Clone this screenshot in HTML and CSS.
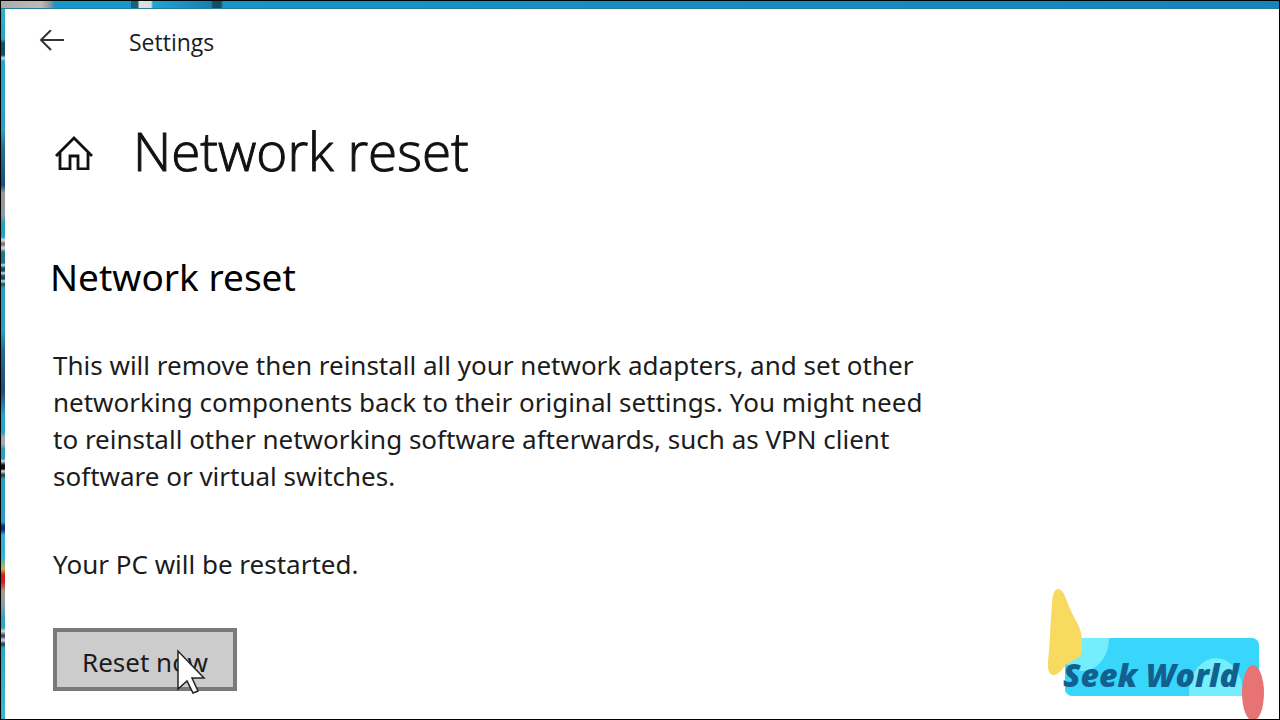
FILE: index.html
```html
<!DOCTYPE html>
<html lang="en">
<head>
    <meta charset="UTF-8">
    <meta name="viewport" content="width=device-width, initial-scale=1.0">
    <title>Network reset</title>
    <link rel="stylesheet" href="styles.css">
</head>
<body>
    <div class="desktop">
        <div class="desktop-left"></div>
        <div class="desktop-top"></div>

        <div class="window">
            <header class="titlebar">
                <button type="button" class="back" aria-label="Back">
                    <svg width="26" height="24" viewBox="0 0 26 24" fill="none" stroke="#333" stroke-width="2">
                        <path d="M25 10H2M12 0L2 10l10 10"/>
                    </svg>
                </button>
                <span class="app-name">Settings</span>
            </header>

            <div class="page-title">
                <a href="#" class="home" aria-label="Home">
                    <svg width="38" height="38" viewBox="0 0 38 38" fill="none" stroke="#111" stroke-width="2.8">
                        <path d="M1 24L19 6l18 18M5 20v17h10V24h8v13h10V20"/>
                    </svg>
                </a>
                <h1>Network reset</h1>
            </div>

            <main>
                <h2>Network reset</h2>
                <p>This will remove then reinstall all your network adapters, and set other<br>
                networking components back to their original settings. You might need<br>
                to reinstall other networking software afterwards, such as VPN client<br>
                software or virtual switches.</p>
                <p>Your PC will be restarted.</p>

                <div class="action">
                    <button type="button" class="reset">Reset now</button>
                    <!-- Mouse pointer -->
                    <svg class="pointer" width="30" height="46" viewBox="0 0 30 46">
                        <path d="M2 2v38l9-8 6 12 5-2-6-13h12z" fill="#fff" stroke="#222" stroke-width="1.5"/>
                    </svg>
                </div>
            </main>
        </div>

        <!-- Channel badge -->
        <div class="badge">
            <svg class="badge-art" width="220" height="132" viewBox="0 0 220 132">
                <defs>
                    <clipPath id="card"><rect x="17" y="50" width="194" height="58" rx="7"/></clipPath>
                </defs>
                <g clip-path="url(#card)">
                    <rect x="17" y="50" width="194" height="58" fill="#38d6fb"/>
                    <ellipse cx="35" cy="50" rx="26" ry="33" fill="#74edfd"/>
                    <ellipse cx="168" cy="105" rx="27" ry="35" fill="#74edfd"/>
                </g>
                <path d="M10 1c6 0 8 11 13 22 5 11 11 18 11 29 0 8 1 14-4 18-5 3-10 4-13 8-5 6-8 9-11 9-5 0-7-6-6-14C2 57 2 37 4 17 4 8 6 1 10 1z" fill="#f7da5f"/>
                <ellipse cx="205" cy="105" rx="11" ry="28" fill="#e77373"/>
            </svg>
            <span class="badge-name">Seek World</span>
        </div>
    </div>
</body>
</html>
```

FILE: styles.css
```css
* {
    box-sizing: border-box;
}

body {
    margin: 0;
    font-family: "Noto Sans", "Open Sans", sans-serif;
    color: #1c1c1c;
    background-color: #000;
}

.desktop {
    position: relative;
    display: grid;
    grid-template-columns: 4px 1fr;
    grid-template-rows: 8px 1fr;
    min-height: 100vh;
    border: 1px solid #000;
    overflow: hidden;
}

.desktop-top {
    grid-column: 1 / 3;
    grid-row: 1;
    background: linear-gradient(to right, #aaa 0, #bbb 40px, #999 48px, #1598cb 54px, #1598cb 130px, #235e70 130px, #235e70 137px, #ddd 138px, #ddd 150px, #1ba5d5 152px, #1780b4 210px, #184b66 212px, #184b66 220px, #1595c8 222px, #1683bd 100%);
    border-bottom: 1px solid #277c98;
}

.desktop-left {
    grid-column: 1;
    grid-row: 1 / 3;
    background: linear-gradient(to bottom, #2fb1c7 0, #2da4c6 38px, #174d62 42px, #174d62 54px, #bde 57px, #2ba3c8 60px, #2d9fc0 130px, #27708d 146px, #174f80 184px, #999 192px, #8a9ba3 214px, #2b9dbd 222px, #2b9dbd 236px, #ddd 239px, #766 243px, #ddd 247px, #23758c 251px, #23758c 262px, #cde 264px, #17505e 267px, #17505e 270px, #cde 272px, #17505e 275px, #17505e 278px, #cde 280px, #17505e 283px, #2ba0be 287px, #2b9dbd 330px, #236a92 350px, #234b78 390px, #2ba3c8 415px, #2ba3c8 432px, #aaa 436px, #aaa 443px, #2b9dbd 448px, #2b9dbd 458px, #ddd 460px, #111 464px, #111 468px, #ddd 470px, #17404c 474px, #2ba0be 478px, #2ba0be 521px, #102c81 525px, #102c81 529px, #35b0ce 534px, #35b0ce 556px, #c9b252 568px, #d11f1f 574px, #d11f1f 581px, #a49c85 590px, #8a9ba3 604px, #2fa5bf 618px, #2fa5bf 627px, #ddd 630px, #17404c 635px, #ddd 639px, #17404c 643px, #2fa5bf 647px, #3eb3cd 100%);
}

.window {
    grid-column: 2;
    grid-row: 2;
    background-color: #fff;
}

.titlebar {
    display: flex;
    align-items: center;
    padding: 16px 34px;
}

.back {
    display: flex;
    margin: 0;
    padding: 0;
    border: none;
    background: none;
}

.app-name {
    margin-left: 64px;
    font-family: "Open Sans", sans-serif;
    font-size: 23px;
    line-height: 34px;
}

.page-title {
    display: flex;
    align-items: center;
    gap: 40px;
    padding: 40px 50px 0;
}

.home {
    display: flex;
}

h1 {
    margin: 0;
    color: #111;
    font-family: "Open Sans", sans-serif;
    font-size: 53px;
    font-weight: 300;
    line-height: 72px;
    -webkit-text-stroke: 1px #111;
}

main {
    padding: 64px 48px 24px;
}

h2 {
    margin: 0 0 44px -3px;
    color: #000;
    font-size: 37px;
    font-weight: 400;
    line-height: 52px;
}

p {
    margin: 0 0 51px;
    font-size: 26px;
    line-height: 37px;
}

.action {
    position: relative;
    display: inline-block;
    margin-top: -6px;
}

.reset {
    padding: 11px 25px 5px;
    border: 4px solid #7a7a7a;
    background-color: #ccc;
    color: #1c1c1c;
    font-family: inherit;
    font-size: 26px;
    line-height: 39px;
}

.pointer {
    position: absolute;
    left: 123px;
    top: 21px;
}

.badge {
    position: absolute;
    right: 11px;
    bottom: -1px;
    width: 220px;
    height: 132px;
}

.badge-art {
    display: block;
}

.badge-name {
    position: absolute;
    left: 15px;
    top: 69px;
    color: #11608f;
    font-family: "Open Sans", sans-serif;
    font-size: 32px;
    font-style: italic;
    font-weight: 800;
    line-height: 36px;
    white-space: nowrap;
}
```
